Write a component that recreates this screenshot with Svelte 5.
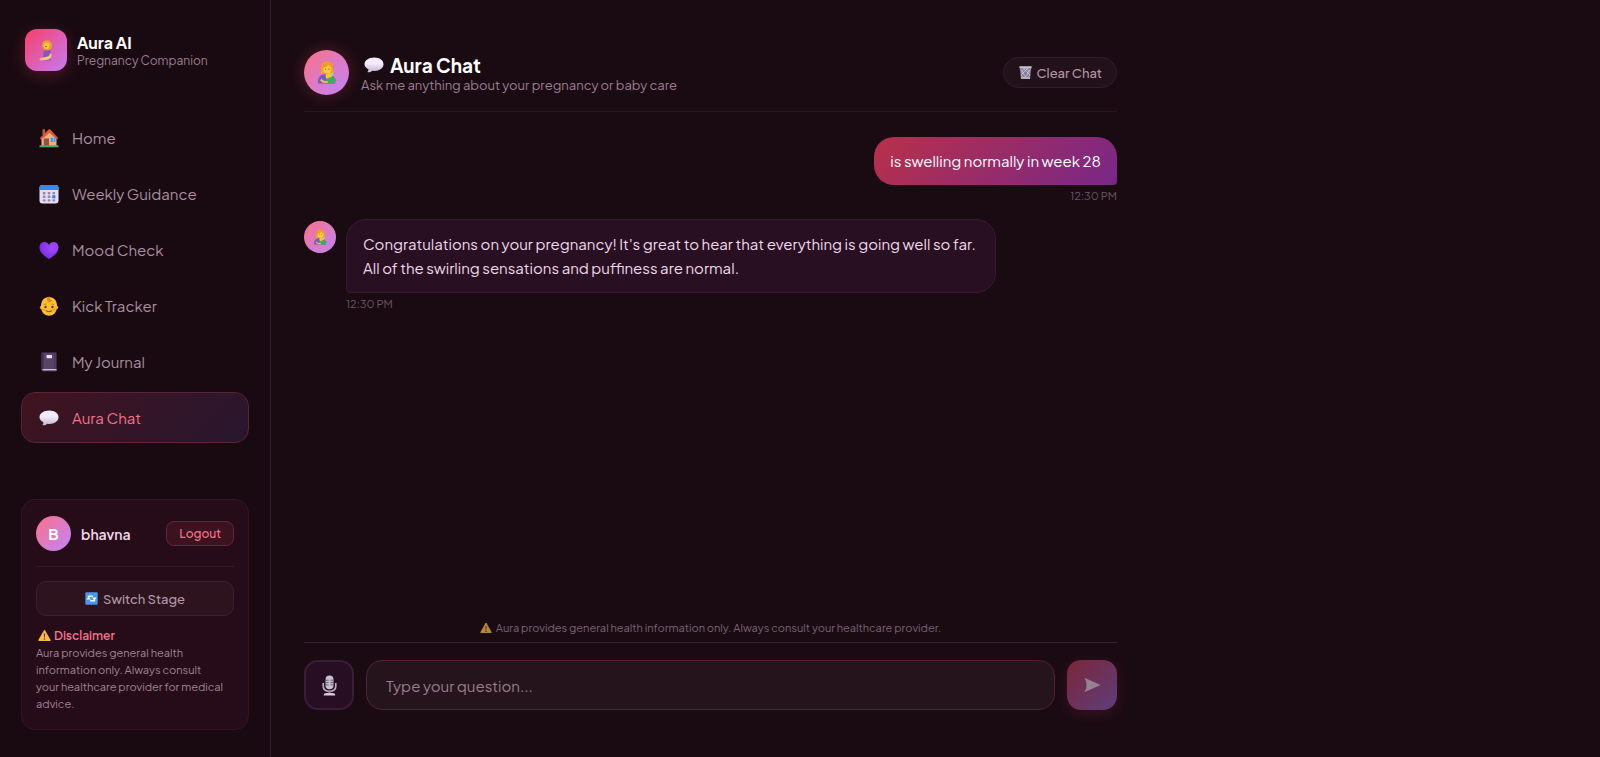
<script lang="ts">
  type Message = { from: 'user' | 'aura'; text: string; time: string };

  const navItems = [
    { icon: 'home', label: 'Home' },
    { icon: 'calendar', label: 'Weekly Guidance' },
    { icon: 'heart', label: 'Mood Check' },
    { icon: 'baby', label: 'Kick Tracker' },
    { icon: 'journal', label: 'My Journal' },
    { icon: 'chat', label: 'Aura Chat' },
  ];

  let active = $state('Aura Chat');
  let question = $state('');
  let messages = $state<Message[]>([
    { from: 'user', text: 'is swelling normally in week 28', time: '12:30 PM' },
    {
      from: 'aura',
      text: "Congratulations on your pregnancy! It's great to hear that everything is going well so far. All of the swirling sensations and puffiness are normal.",
      time: '12:30 PM',
    },
  ]);

  function send(e: SubmitEvent) {
    e.preventDefault();
    if (!question.trim()) return;
    const time = new Date().toLocaleTimeString('en-US', { hour: '2-digit', minute: '2-digit' });
    messages.push({ from: 'user', text: question.trim(), time });
    question = '';
  }
</script>

{#snippet icon(name: string, size: number)}
  <svg width={size} height={size} viewBox="0 0 20 20" aria-hidden="true">
    {#if name === 'home'}
      <path d="M3.5 1.2h2.6v6H3.5z" fill="#a8604a" />
      <path d="M2.5 9.5 10.5 3l7 6.5V18h-15z" fill="#eab27c" />
      <path d="M0.8 10.2 9.6 1.6q.9-.8 1.8 0l7.8 8.6-1.4 1.3-7.3-6.8-8.2 7z" fill="#e2583f" />
      <path d="M4.8 10.5H10V18H4.8z" fill="#8b5442" />
      <path d="M11.8 9.8h4.6V14h-4.6z" fill="#3f9be8" />
      <path d="M14 9.8h.5V14H14z" fill="#b5daf7" />
      <path d="M.5 17.3h19v2H.5z" fill="#55a568" />
    {:else if name === 'calendar'}
      <rect x=".5" y="1" width="19" height="18.5" rx="3" fill="#e6dcf5" />
      <path d="M.5 6V4a3 3 0 0 1 3-3h13a3 3 0 0 1 3 3v2z" fill="#2f8df0" />
      <g fill="#9189ad">
        <rect x="3.8" y="8" width="2.8" height="2.4" rx=".8" />
        <rect x="8.6" y="8" width="2.8" height="2.4" rx=".8" />
        <rect x="13.4" y="8" width="2.8" height="2.4" rx=".8" />
        <rect x="3.8" y="11.6" width="2.8" height="2.4" rx=".8" />
        <rect x="8.6" y="11.6" width="2.8" height="2.4" rx=".8" />
        <rect x="3.8" y="15.2" width="2.8" height="2.4" rx=".8" />
        <rect x="8.6" y="15.2" width="2.8" height="2.4" rx=".8" />
        <rect x="13.4" y="15.2" width="2.8" height="2.4" rx=".8" />
      </g>
      <rect x="13.2" y="11.3" width="3.2" height="3" rx=".6" fill="#2684ec" />
    {:else if name === 'heart'}
      <defs>
        <radialGradient id="heart-fill" cx=".7" cy=".3" r=".9">
          <stop offset="0" stop-color="#a04bff" />
          <stop offset="1" stop-color="#7a22e0" />
        </radialGradient>
      </defs>
      <path
        d="M10 19C6 16.200.5 12.700.5 7.500.5 4.200 2.700 2 5.200 2 7.500 2 9.200 3.300 10 5c.8-1.700 2.500-3 4.800-3 2.500 0 4.700 2.200 4.700 5.500 0 5.200-5.500 8.700-9.500 11.500z"
        fill="url(#heart-fill)"
      />
    {:else if name === 'baby'}
      <circle cx="2.600" cy="11.5" r="1.8" fill="#f2a51f" />
      <circle cx="17.400" cy="11.5" r="1.8" fill="#f2a51f" />
      <path d="M10 1c5 0 8 3.700 8 9.200 0 5.900-3.300 9.500-8 9.500s-8-3.600-8-9.500C2 4.700 5 1 10 1z" fill="#fcbd32" />
      <path d="M8.200 2.200c.3-1.500 2.800-2.200 4-.8-1.200 0-1.800.5-1.600 1.300.3 1.300 1.800 1.300 2.200.5.6 1.800-1.500 3.200-3.300 2.500-1.300-.6-1.500-2-1.300-3.500z" fill="#d98b20" />
      <circle cx="6.500" cy="11" r="1.2" fill="#5b3b2a" />
      <circle cx="13.500" cy="11" r="1.2" fill="#5b3b2a" />
      <path d="M5 8.600q1.200-.9 2.500-.4M15 8.600q-1.200-.9-2.500-.4" fill="none" stroke="#a8641c" stroke-width=".7" />
      <path d="M7.300 14.800q2.700 1.800 5.400 0" fill="none" stroke="#a8501c" stroke-width="1.1" stroke-linecap="round" />
      <ellipse cx="4.700" cy="13.5" rx="1.3" ry="1" fill="#f5903c" />
      <ellipse cx="15.300" cy="13.5" rx="1.3" ry="1" fill="#f5903c" />
    {:else if name === 'journal'}
      <path d="M3 .5h14.500V19h-13q-2 0-2-1.500V1z" fill="#574468" />
      <path d="M2.500 1h2v17.300h-2zM15.500.5h.7V17h-.7z" fill="#3f304d" />
      <path d="M3.500 17h14v1.700h-14z" fill="#cdbfda" />
      <path d="M3 18.500h14.500v1H4q-1 0-1-1z" fill="#463555" />
      <rect x="7.5" y="3" width="5.500" height="3.2" rx=".6" fill="#ece2f4" />
    {:else if name === 'chat'}
      <defs>
        <linearGradient id="bubble-fill" x1="0" y1="0" x2="0" y2="1">
          <stop offset=".4" stop-color="#f3eafa" />
          <stop offset="1" stop-color="#c3b4d3" />
        </linearGradient>
      </defs>
      <path
        d="M10.300 2.500c5.400 0 9.200 2.800 9.200 6.700s-3.800 6.700-9.200 6.700c-.8 0-1.500 0-2.200-.2-.8 1-2.200 1.700-3.900 1.600-.6 0-.7-.6-.4-1 .5-.6.7-1.300.6-2C2 13 .5 11.200.5 9.200c0-3.900 4.400-6.700 9.800-6.700z"
        fill="url(#bubble-fill)"
      />
    {:else if name === 'refresh'}
      <rect x=".5" y=".5" width="19" height="19" rx="1.5" fill="#4b97e6" />
      <path d="M5.500 10V6.500H12M14.500 10v3.500H8" fill="none" stroke="#f4f8ff" stroke-width="2.4" />
      <path d="M10.800 8.500h7.200l-3.600 4zM2 11.500h7.200l-3.600-4z" fill="#f4f8ff" />
    {:else if name === 'warning'}
      <path d="M9 2.200q1-1.500 2 0l8.300 14.500q.7 1.800-1 1.800H1.700q-1.700 0-1-1.800z" fill="#fcb84a" />
      <path d="M9 7h2l-.4 6H9.400z" fill="#4e3645" />
      <circle cx="10" cy="15.5" r="1.2" fill="#4e3645" />
    {:else if name === 'trash'}
      <path d="M1 1h18l-2 18.500H3z" fill="#857b94" />
      <path
        d="M2 5l5 5-4 4 5 5M6 3l8 8-6 8M18 5l-5 5 4 4-5 5M14 3 6 11l6 8M10 3 4 9l3 4M10 3l6 6-3 4"
        fill="none"
        stroke="#d5cddd"
        stroke-width="1.1"
      />
      <path d="M.5.5h19l-.3 2.800H.8zM2.700 17.500h14.600l-.3 2H3z" fill="#c9c0d3" />
    {:else if name === 'mic'}
      <path d="M6.200 4.500q0-4 3.800-4t3.800 4V10q0 3.600-3.800 3.600T6.200 10z" fill="#c9bfd2" />
      <path d="M6.200 5h3M6.200 7.200h3M6.200 9.400h3M10.800 5h3M10.800 7.200h3M10.800 9.400h3" stroke="#5d4a63" stroke-width=".8" />
      <path d="M4 7.500v3q0 5 6 5t6-5v-3" fill="none" stroke="#bcb0c6" stroke-width="1.5" />
      <path d="M9 15h2v2.500H9z" fill="#8f829d" />
      <path d="M4.500 19.500q0-2.300 3-2.300h5q3 0 3 2.300z" fill="#d5cbdc" />
    {:else if name === 'pregnant'}
      <path d="M8.500 10.500q3-2 5.500 0 1.200 2.500.3 5v4H7q1-2 .4-3.500-.5-3 1.100-5.500z" fill="#8557bd" />
      <circle cx="11" cy="5.800" r="4.600" fill="#e8a12c" />
      <path d="M7.700 5.500q1.700-2.600 4.800-1.800 1.500 1.700.4 4-1.800 2.300-3.800 1.200-1.400-1.400-1.400-3.400z" fill="#fac344" />
      <path d="M9.200 6.600q.8.600 1.700.2" fill="none" stroke="#7c471c" stroke-width=".7" />
      <path d="M13.600 12.500q0 3-3 3.700l-5.600 1q-1.200.5-.8 1.600.5.800 2 .7l5.500-.6q3.600-1 3.500-4.800z" fill="#f6c27c" />
    {:else if name === 'feeding'}
      <path d="M5.500 6q0-5.500 5-5.500t5 5.500l.5 5H5z" fill="#f3a622" />
      <ellipse cx="10.700" cy="6.800" rx="3.500" ry="4.200" fill="#ffca45" />
      <path d="M6 5.800q4 .5 5.500-2.800 1.500 2.400 3.700 2.800L14 1.800 10 .8 6.500 3z" fill="#ed9d1d" />
      <circle cx="9.300" cy="7" r=".5" fill="#68401f" />
      <circle cx="12.200" cy="7" r=".5" fill="#68401f" />
      <path d="M2.500 19.500q-.5-7 5-8h6q4 1 4 8z" fill="#765bc9" />
      <circle cx="12" cy="13" r="2.800" fill="#f9c13c" />
      <path d="M9 19.500q-1-4 2.500-4.500 3.500-2.500 6.500.5 1 2.500-1 4z" fill="#45a765" />
      <path d="M5.500 15.500q2 2.800 5.500 1.800l.3 1.600q-4.800 1-6.800-2z" fill="#f9bf47" />
      <path d="m13 11 2.300-1 1 2.500-2.200.8z" fill="#a7dc74" />
    {:else if name === 'send'}
      <path d="M1.500 2 19.500 10l-18 8q2.500-4 2.500-8T1.500 2z" fill="currentColor" />
    {/if}
  </svg>
{/snippet}

<div class="app">
  <aside class="sidebar">
    <div class="brand">
      <div class="brand-logo">{@render icon('pregnant', 22)}</div>
      <div>
        <div class="brand-name">Aura AI</div>
        <div class="brand-sub">Pregnancy Companion</div>
      </div>
    </div>

    <nav>
      {#each navItems as item}
        <button class="nav-item" class:active={active === item.label} onclick={() => (active = item.label)}>
          {@render icon(item.icon, 20)}
          <span>{item.label}</span>
        </button>
      {/each}
    </nav>

    <div class="account">
      <div class="user">
        <div class="user-avatar">B</div>
        <span class="user-name">bhavna</span>
        <button class="logout">Logout</button>
      </div>
      <button class="switch">{@render icon('refresh', 13)} Switch Stage</button>
      <div class="disclaimer">
        <strong>{@render icon('warning', 13)} Disclaimer</strong>
        <p>Aura provides general health information only. Always consult your&nbsp;healthcare provider for medical advice.</p>
      </div>
    </div>
  </aside>

  <main>
    <header>
      <div class="chat-avatar">{@render icon('feeding', 23)}</div>
      <div class="heading">
        <h1>{@render icon('chat', 20)} Aura Chat</h1>
        <p>Ask me anything about your pregnancy or baby care</p>
      </div>
      <button class="clear" onclick={() => (messages = [])}>{@render icon('trash', 13)} Clear Chat</button>
    </header>

    <div class="messages">
      {#each messages as message}
        <div class="message {message.from}">
          {#if message.from === 'aura'}
            <div class="message-avatar">{@render icon('feeding', 16)}</div>
          {/if}
          <div class="message-body">
            <div class="bubble">{message.text}</div>
            <time>{message.time}</time>
          </div>
        </div>
      {/each}
    </div>

    <p class="notice">
      {@render icon('warning', 12)} Aura provides general health information only. Always consult your healthcare provider.
    </p>

    <form onsubmit={send}>
      <button type="button" class="mic" aria-label="Voice input">{@render icon('mic', 21)}</button>
      <input type="text" placeholder="Type your question..." aria-label="Your question" bind:value={question} />
      <button class="send" aria-label="Send" disabled={!question.trim()}>{@render icon('send', 18)}</button>
    </form>
  </main>
</div>

<style>
  :global(body) {
    margin: 0;
    background: #1a0b13;
  }

  .app {
    display: flex;
    min-height: 100vh;
    color: #f0d9ea;
    font-family: 'Plus Jakarta Sans', Inter, sans-serif;
    font-size: 15px;
  }

  .app * {
    box-sizing: border-box;
  }

  svg {
    flex: none;
  }

  p,
  h1 {
    margin: 0;
  }

  button,
  input {
    font: inherit;
  }

  button {
    display: flex;
    align-items: center;
    cursor: pointer;
  }

  .sidebar {
    display: flex;
    flex-direction: column;
    flex: none;
    width: 271px;
    padding: 29px 21px 27px;
    border-right: 1px solid #301b2a;
    background: #190a12;
  }

  .brand {
    display: flex;
    align-items: center;
    gap: 10px;
    padding: 0 0 0 4px;
    margin-bottom: 41px;
  }

  .brand-logo {
    display: grid;
    place-items: center;
    width: 42px;
    height: 42px;
    border-radius: 12px;
    background: linear-gradient(135deg, #f83f67, #c77af5);
    box-shadow: 0 4px 16px rgba(244, 63, 94, 0.25);
  }

  .brand-name {
    padding-top: 2px;
    color: #fff;
    font-size: 16px;
    font-weight: 700;
    line-height: 20px;
  }

  .brand-sub {
    color: #9a7d90;
    font-size: 12px;
    line-height: 16px;
  }

  nav {
    display: flex;
    flex-direction: column;
    gap: 5px;
    margin-bottom: auto;
  }

  .nav-item {
    gap: 13px;
    height: 51px;
    padding: 0 17px;
    border: 1px solid transparent;
    border-radius: 14px;
    background: none;
    color: #a98f9f;
  }

  .nav-item.active {
    border-color: #5c2236;
    background: linear-gradient(135deg, #3f131f, #29172f);
    color: #f4728a;
  }

  .account {
    padding: 16px 14px;
    border: 1px solid #341422;
    border-radius: 14px;
    background: #260c18;
  }

  .user {
    display: flex;
    align-items: center;
    gap: 10px;
    padding-bottom: 15px;
    margin-bottom: 14px;
    border-bottom: 1px solid #351827;
  }

  .user-avatar {
    display: grid;
    place-items: center;
    width: 35px;
    height: 35px;
    border-radius: 50%;
    background: linear-gradient(135deg, #fb7185, #c084fc);
    color: #fff;
    font-weight: 700;
  }

  .user-name {
    flex: 1;
    font-size: 14px;
    font-weight: 600;
  }

  .logout {
    height: 25px;
    padding: 0 12px;
    border: 1px solid #6b2236;
    border-radius: 8px;
    background: #3b121f;
    color: #f4728a;
    font-size: 12px;
    font-weight: 500;
  }

  .switch {
    justify-content: center;
    gap: 5px;
    width: 100%;
    height: 35px;
    margin-bottom: 11px;
    border: 1px solid #3a2031;
    border-radius: 10px;
    background: #2c131e;
    color: #b296a8;
    font-size: 13px;
    font-weight: 500;
  }

  .disclaimer {
    padding-bottom: 1px;
    color: #a08395;
    font-size: 11px;
    line-height: 17px;
  }

  .disclaimer strong {
    display: flex;
    align-items: center;
    gap: 3px;
    padding-left: 2px;
    color: #f4728a;
    font-size: 12px;
    font-weight: 600;
  }

  main {
    display: flex;
    flex-direction: column;
    flex: 1;
    max-width: 879px;
    padding: 50px 33px 47px;
  }

  header {
    display: flex;
    align-items: center;
    gap: 12px;
    padding-bottom: 16px;
    border-bottom: 1px solid #2b1429;
  }

  .chat-avatar,
  .message-avatar {
    display: grid;
    place-items: center;
    flex: none;
    width: 45px;
    height: 45px;
    border-radius: 50%;
    background: linear-gradient(135deg, #fb7185, #c084fc);
  }

  .chat-avatar {
    box-shadow: 0 0 16px rgba(244, 63, 94, 0.3);
  }

  .heading {
    flex: 1;
    padding-top: 3px;
  }

  h1 {
    display: flex;
    align-items: center;
    gap: 6px;
    padding-left: 3px;
    color: #fff;
    font-size: 19px;
    font-weight: 700;
    line-height: 22px;
  }

  .heading p {
    color: #9a7d90;
    font-size: 13px;
    line-height: 18px;
  }

  .clear {
    gap: 4px;
    height: 31px;
    padding: 0 14px 0 15px;
    border: 1px solid #321d2a;
    border-radius: 16px;
    background: #23111a;
    color: #b296a8;
    font-size: 13px;
    font-weight: 500;
  }

  .messages {
    display: flex;
    flex-direction: column;
    flex: 1;
    gap: 16px;
    padding-top: 25px;
  }

  .message {
    display: flex;
    gap: 10px;
  }

  .message.user {
    justify-content: flex-end;
    padding: 0;
    margin: 0;
    border: none;
  }

  .message-avatar {
    width: 32px;
    height: 32px;
    margin-top: 2px;
  }

  .message-body {
    display: flex;
    flex-direction: column;
    gap: 4px;
    max-width: 80%;
  }

  .bubble {
    padding: 12px 16px;
    border: 1px solid #3a1a32;
    border-radius: 20px 20px 20px 4px;
    background: #281022;
    line-height: 24px;
  }

  .user .bubble {
    border: none;
    border-radius: 20px 20px 4px 20px;
    background: linear-gradient(135deg, #b93049, #782788);
    color: #fff;
  }

  .user .message-body {
    align-items: flex-end;
  }

  time {
    color: #6c5565;
    font-size: 11px;
    line-height: 14px;
  }

  .notice {
    display: flex;
    justify-content: center;
    align-items: center;
    gap: 4px;
    color: #7c6274;
    font-size: 11px;
    line-height: 16px;
  }

  .notice svg {
    opacity: 0.7;
  }

  form {
    display: flex;
    gap: 12px;
    padding-top: 17px;
    margin-top: 6px;
    border-top: 1px solid #34202f;
  }

  .mic,
  .send {
    justify-content: center;
    flex: none;
    width: 50px;
    height: 50px;
    padding: 0;
    border: 2px solid #3a1c3b;
    border-radius: 14px;
    background: #280e22;
  }

  .send {
    border: none;
    background: linear-gradient(135deg, #7c2539, #5e3e7c);
    box-shadow: 0 4px 16px rgba(244, 63, 94, 0.14);
    color: #97808f;
  }

  input {
    flex: 1;
    min-width: 0;
    height: 50px;
    padding: 0 19px;
    border: 1px solid #5a1d34;
    border-radius: 16px;
    outline: none;
    background: #26141d;
    color: #f0d9ea;
  }

  input::placeholder {
    color: #9a7d90;
  }
</style>
